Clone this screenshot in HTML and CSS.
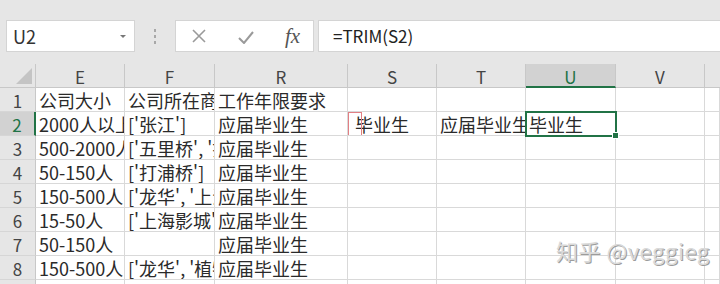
FILE: index.html
```html
<!DOCTYPE html>
<html lang="zh">
<head>
<meta charset="utf-8">
<link rel="stylesheet" href="styles.css">
</head>
<body>
<div class="app">
  <div class="toolbar">
    <div class="namebox"><span class="nb-text">U2</span><span class="nb-arrow"></span></div>
    <div class="dots"><i></i><i></i><i></i></div>
    <div class="fxbox">
      <svg class="ic-x" width="14" height="14" viewBox="0 0 14 14"><path d="M1 1L13 13M13 1L1 13" stroke="#9a9a9a" stroke-width="1.6" fill="none"/></svg>
      <svg class="ic-check" width="16" height="13" viewBox="0 0 16 13"><path d="M1 7L6 12L15 1" stroke="#9a9a9a" stroke-width="2" fill="none"/></svg>
      <span class="fx">fx</span>
    </div>
    <div class="formula">=TRIM(S2)</div>
  </div>
  <div class="sheet">
    <div class="hd corner"><span class="tri"></span></div>
    <div class="hd col">E</div>
    <div class="hd col">F</div>
    <div class="hd col">R</div>
    <div class="hd col">S</div>
    <div class="hd col">T</div>
    <div class="hd col sel">U</div>
    <div class="hd col">V</div>
    <div class="hd col last"></div>

    <div class="hd row">1</div>
    <div class="c">公司大小</div><div class="c">公司所在商区</div><div class="c">工作年限要求</div><div class="c"></div><div class="c"></div><div class="c"></div><div class="c"></div><div class="c"></div>

    <div class="hd row sel">2</div>
    <div class="c">2000人以上</div><div class="c">['张江']</div><div class="c">应届毕业生</div><div class="c s2"><span class="redbox"></span>毕业生</div><div class="c">应届毕业生</div><div class="c active">毕业生<span class="handle"></span></div><div class="c"></div><div class="c"></div>

    <div class="hd row">3</div>
    <div class="c">500-2000人</div><div class="c">['五里桥', '打浦桥']</div><div class="c">应届毕业生</div><div class="c"></div><div class="c"></div><div class="c"></div><div class="c"></div><div class="c"></div>

    <div class="hd row">4</div>
    <div class="c">50-150人</div><div class="c">['打浦桥']</div><div class="c">应届毕业生</div><div class="c"></div><div class="c"></div><div class="c"></div><div class="c"></div><div class="c"></div>

    <div class="hd row">5</div>
    <div class="c">150-500人</div><div class="c">['龙华', '上海南站']</div><div class="c">应届毕业生</div><div class="c"></div><div class="c"></div><div class="c"></div><div class="c"></div><div class="c"></div>

    <div class="hd row">6</div>
    <div class="c">15-50人</div><div class="c">['上海影城']</div><div class="c">应届毕业生</div><div class="c"></div><div class="c"></div><div class="c"></div><div class="c"></div><div class="c"></div>

    <div class="hd row">7</div>
    <div class="c">50-150人</div><div class="c"></div><div class="c">应届毕业生</div><div class="c"></div><div class="c"></div><div class="c"></div><div class="c"></div><div class="c"></div>

    <div class="hd row">8</div>
    <div class="c">150-500人</div><div class="c">['龙华', '植物园']</div><div class="c">应届毕业生</div><div class="c"></div><div class="c"></div><div class="c"></div><div class="c"></div><div class="c"></div>

    <div class="hd row">9</div>
    <div class="c"></div><div class="c"></div><div class="c"></div><div class="c"></div><div class="c"></div><div class="c"></div><div class="c"></div><div class="c"></div>
  </div>
  <div class="watermark">知乎 @veggieg</div>
</div>
</body>
</html>
```

FILE: styles.css
```css
html, body {
  margin: 0;
  padding: 0;
}
body {
  width: 720px;
  height: 284px;
  overflow: hidden;
  background: #ffffff;
  font-family: "Noto Sans CJK SC", "Noto Sans", sans-serif;
  color: #222;
}
.app {
  position: relative;
  width: 720px;
  height: 284px;
  overflow: hidden;
}
.toolbar {
  height: 64px;
  background: #e6e6e6;
  display: flex;
  align-items: flex-start;
  padding: 20px 0 0 6px;
  box-sizing: border-box;
}
.namebox {
  width: 129px;
  height: 32px;
  box-sizing: border-box;
  background: #fff;
  border: 1px solid #d4d4d4;
  display: flex;
  align-items: center;
  justify-content: space-between;
  padding: 0 8px 0 6px;
}
.nb-text {
  font-size: 18px;
  color: #333;
  line-height: 1;
}
.nb-arrow {
  width: 0;
  height: 0;
  border-left: 3px solid transparent;
  border-right: 3px solid transparent;
  border-top: 3px solid #777;
}
.dots {
  width: 40px;
  height: 32px;
  display: flex;
  flex-direction: column;
  align-items: center;
  justify-content: center;
  gap: 3px;
}
.dots i {
  display: block;
  width: 2px;
  height: 3px;
  background: #a8a8a8;
}
.fxbox {
  width: 139px;
  height: 32px;
  box-sizing: border-box;
  background: #fff;
  border: 1px solid #d4d4d4;
  display: flex;
  align-items: center;
  padding-left: 16px;
}
.ic-x { margin-right: 32px; }
.ic-check { margin-right: 31px; margin-top: 2px; }
.fx {
  font-family: "Liberation Serif", serif;
  font-style: italic;
  font-size: 21px;
  color: #555;
  line-height: 1;
}
.formula {
  margin-left: 4px;
  flex: 1;
  height: 32px;
  box-sizing: border-box;
  background: #fff;
  border: 1px solid #d4d4d4;
  border-right: none;
  font-size: 17px;
  line-height: 30px;
  padding-left: 14px;
  color: #222;
}
.sheet {
  display: grid;
  grid-template-columns: 36px 89px 90px 133px 89px 89px 90px 89px 15px;
  grid-template-rows: 24px repeat(9, 24px);
}
.hd {
  background: #e6e6e6;
  color: #444;
  font-size: 17px;
  display: flex;
  align-items: center;
  justify-content: center;
  box-sizing: border-box;
  line-height: 1;
}
.col {
  border-right: 1px solid #c8c8c8;
  border-bottom: 1px solid #c8c8c8;
  padding-top: 2px;
}
.col.last { border-right: none; }
.row {
  border-right: 1px solid #c8c8c8;
  border-bottom: 1px solid #d6d6d6;
  padding-top: 2px;
}
.hd.sel {
  background: #d2d2d2;
  color: #217346;
}
.col.sel { border-bottom: 2px solid #217346; }
.row.sel { border-right: 2px solid #217346; }
.corner {
  position: relative;
  border-right: 1px solid #c8c8c8;
  border-bottom: 1px solid #c8c8c8;
}
.tri {
  position: absolute;
  right: 3px;
  bottom: 3px;
  width: 0;
  height: 0;
  border-left: 16px solid transparent;
  border-bottom: 16px solid #c4c4c4;
}
.c {
  box-sizing: border-box;
  border-right: 1px solid #d9d9d9;
  border-bottom: 1px solid #d9d9d9;
  font-size: 18px;
  line-height: 24px;
  white-space: nowrap;
  overflow: hidden;
  padding-left: 3px;
  color: #2a2a2a;
}
.s2 {
  position: relative;
  padding-left: 7px;
}
.redbox {
  position: absolute;
  left: 0;
  top: 0;
  width: 14px;
  height: 24px;
  box-sizing: border-box;
  border: 1px solid #e27f84;
  z-index: 1;
}
.active {
  position: relative;
  overflow: visible;
  outline: 2px solid #217346;
  outline-offset: -1px;
  z-index: 2;
}
.handle {
  position: absolute;
  right: -4px;
  bottom: -4px;
  width: 5px;
  height: 5px;
  background: #217346;
  border: 1px solid #fff;
}
.watermark {
  position: absolute;
  left: 556px;
  top: 236px;
  font-size: 22px;
  color: #dadada;
  text-shadow: 1px 1px 0 #9c9c9c;
  letter-spacing: 0.5px;
  line-height: 28px;
}
```
